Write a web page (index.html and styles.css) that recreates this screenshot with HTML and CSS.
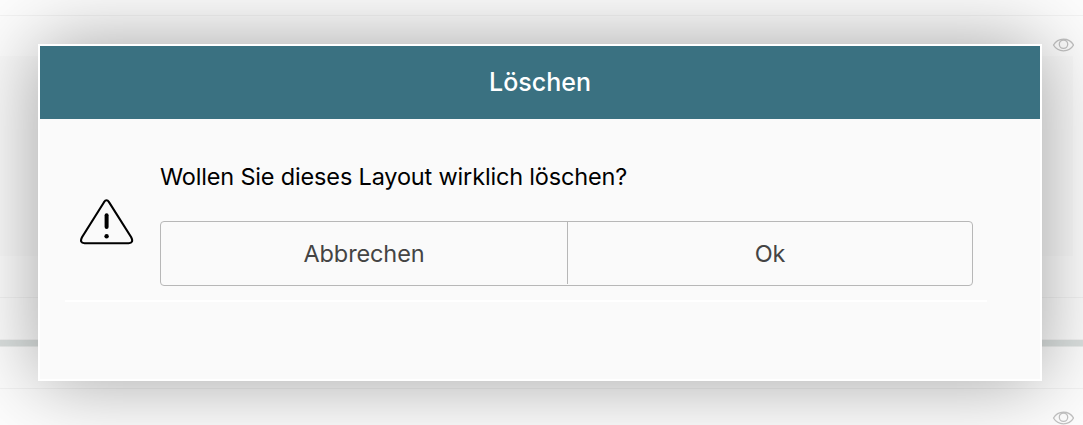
FILE: index.html
```html
<!DOCTYPE html>
<html lang="de">
<head>
<meta charset="utf-8">
<title>Löschen</title>
<link rel="stylesheet" href="styles.css">
</head>
<body>
<div class="page">
  <div class="row row-top"></div>
  <div class="row row-layout">
    <div class="preview"></div>
    <svg class="eye" viewBox="0 0 22 14"><path d="M1.5 7C6-.7 17-.7 21.5 7 17 14.7 6 14.7 1.5 7Z"/><circle cx="11.5" cy="6.2" r="4.2"/></svg>
  </div>
  <div class="row row-actions"></div>
  <div class="divider"></div>
  <div class="row row-gap"></div>
  <div class="row row-next">
    <svg class="eye" viewBox="0 0 22 14"><path d="M1.5 7C6-.7 17-.7 21.5 7 17 14.7 6 14.7 1.5 7Z"/><circle cx="11.5" cy="6.2" r="4.2"/></svg>
  </div>
</div>
<div class="dialog" role="dialog">
  <h1 class="title">Löschen</h1>
  <div class="content">
    <svg class="warning" viewBox="0 0 54 46"><path class="outline" d="M24 3.2Q26.5-.6 29 3.2L51.2 38.2Q54 43.9 48.6 44.2H4.6Q-.8 43.9 2 38.2Z"/><path class="mark" d="M26.6 16.2V28"/><circle cx="26.6" cy="37.2" r="2.2"/></svg>
    <div class="main">
      <p class="message">Wollen Sie dieses Layout wirklich löschen?</p>
      <div class="buttons">
        <button class="button">Abbrechen</button>
        <button class="button">Ok</button>
      </div>
    </div>
  </div>
</div>
</body>
</html>
```
FILE: styles.css
```css
* { box-sizing: border-box; }
body {
  margin: 0;
  width: 1083px;
  height: 425px;
  overflow: hidden;
  background: #fdfdfd;
  font-family: Inter, "Liberation Sans", sans-serif;
}
.page { display: flex; flex-direction: column; height: 425px; }
.row { flex: none; border-bottom: 1px solid #f3f3f3; }
.row-top { height: 16px; }
.row-layout { height: 282px; display: flex; justify-content: flex-end; }
.preview {
  flex: 1;
  height: 200px;
  margin: 40px -21px 0 0;
  background: #fafafa;
}
.eye {
  width: 22px;
  height: 14px;
  margin: 22px 9px 0 0;
  fill: none;
  stroke: #c2c2c2;
  stroke-width: 1.3;
}
.row-actions { height: 42px; }
.divider { flex: none; height: 7px; background: #dbe0df; border-bottom: 1px solid #eceeed; }
.row-gap { height: 42px; }
.row-next { flex: 1; display: flex; justify-content: flex-end; border: 0; }
.dialog {
  position: absolute;
  left: 38px;
  top: 44px;
  width: 1004px;
  height: 337px;
  border: 2px solid #fff;
  background: #fafafa;
  box-shadow: 0 0 75px rgba(0, 0, 0, .36);
}
.title {
  margin: 0;
  height: 73px;
  background: #3a7181;
  color: #fff;
  font-size: 25px;
  font-weight: 500;
  line-height: 73px;
  text-align: center;
}
.content {
  display: flex;
  gap: 26px;
  margin: 0 53px 0 25px;
  height: 183px;
  padding: 0 14px 0 15px;
  border-bottom: 2px solid #fff;
}
.warning { flex: none; width: 54px; height: 46px; margin-top: 80px; }
.warning .outline { fill: none; stroke: #000; stroke-width: 2.1; }
.warning .mark { fill: none; stroke: #000; stroke-width: 4; stroke-linecap: round; }
.main { flex: 1; }
.message { margin: 43px 0 29px; font-size: 23.5px; letter-spacing: -.17px; line-height: 30px; color: #000; white-space: nowrap; }
.buttons {
  display: grid;
  grid-template-columns: 406px 1fr;
  width: 813px;
  height: 65px;
  padding-bottom: 1px;
  border: 1px solid #b7b7b7;
  border-radius: 4px;
}
.button {
  padding: 2px 0 0;
  border: 0;
  background: none;
  color: #444;
  font: 400 23.5px/60px Inter, "Liberation Sans", sans-serif;
  letter-spacing: -.12px;
}
.button + .button { border-left: 1px solid #b7b7b7; }
```
